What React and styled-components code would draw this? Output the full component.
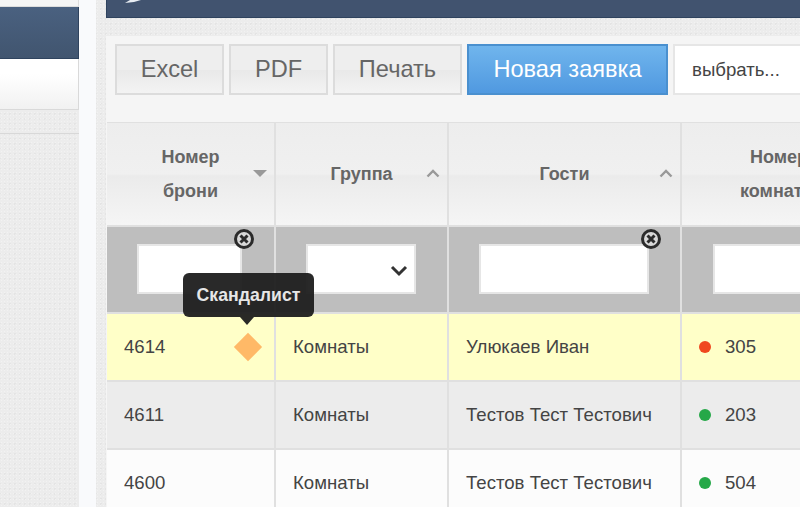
import React from 'react';
import styled, { createGlobalStyle } from 'styled-components';

const GlobalStyle = createGlobalStyle`
    html, body {
        margin: 0;
        height: 100%;
        overflow: hidden;
    }
    body {
        font-family: "Liberation Sans", Arial, sans-serif;
        color: #333;
    }
    #root {
        height: 100%;
    }
`;

const texture = `
    background-color: #ececec;
    background-image:
        radial-gradient(#f2f2f2 1px, transparent 1px),
        radial-gradient(#e4e4e4 1px, transparent 1px);
    background-size: 3px 3px, 5px 5px;
    background-position: 0 0, 2px 1px;
`;

const Page = styled.div`
    display: flex;
    height: 100%;
    overflow: hidden;
`;

const Sidebar = styled.aside`
    width: 79px;
    flex: none;
    display: flex;
    flex-direction: column;
    ${texture}
`;

const SideTop = styled.div`
    height: 7px;
    box-sizing: border-box;
    background: #f5f5f5;
    border-right: 1px solid #ddd;
    border-bottom: 1px solid #ddd;
`;

const SideActive = styled.div`
    height: 52px;
    background: linear-gradient(#4a6180, #41556f);
    border-right: 1px solid #2f435e;
    border-bottom: 1px solid #2f435e;
    box-sizing: border-box;
`;

const SideItem = styled.div`
    height: 51px;
    background: linear-gradient(#fff 30%, #f1f1f1);
    border-right: 1px solid #d9d9d9;
    border-bottom: 1px solid #d9d9d9;
    box-sizing: border-box;
`;

const SideDivider = styled.div`
    height: 23px;
    border-bottom: 1px solid #d8d8d8;
`;

const Gutter = styled.div`
    width: 17px;
    flex: none;
    background: #f9fafc;
`;

const Content = styled.main`
    flex: 1;
    min-width: 0;
    display: flex;
    flex-direction: column;
    padding-left: 10px;
    ${texture}
`;

const TopBar = styled.div`
    height: 18px;
    flex: none;
    background: #41536f;
    border-left: 1px solid #2f435e;
    border-bottom: 1px solid #2f435e;
    box-sizing: border-box;
    margin-bottom: 18px;
    padding-left: 18px;
`;

const TopIcon = styled.svg`
    display: block;
    width: 16px;
    height: 4px;
`;

const Panel = styled.section`
    flex: 1;
    min-height: 0;
    background: #f5f5f5;
    overflow: hidden;
`;

const Toolbar = styled.div`
    display: flex;
    gap: 5px;
    padding: 8px 0 0 9px;
    height: 51px;
    margin-bottom: 27px;
`;

const ToolButton = styled.button`
    flex: none;
    width: ${p => p.$w}px;
    height: 51px;
    padding: 0;
    box-sizing: border-box;
    border: 2px solid ${p => (p.$primary ? '#4a90cf' : '#dcdcdc')};
    background: ${p =>
        p.$primary
            ? 'linear-gradient(#70b5ed, #5099e0)'
            : 'linear-gradient(#eee 0, #eee 50%, #e9e9e9 52%, #f3f3f3 100%)'};
    color: ${p => (p.$primary ? '#fff' : '#666')};
    font: 23.6px "Liberation Sans", Arial, sans-serif;
`;

const SelectBox = styled.div`
    flex: none;
    width: 160px;
    height: 51px;
    box-sizing: border-box;
    border: 2px solid #e6e6e6;
    background: #fff;
    color: #444;
    font-size: 18.6px;
    display: flex;
    align-items: center;
    padding-left: 17px;
`;

const Table = styled.table`
    table-layout: fixed;
    width: 771px;
    border-collapse: separate;
    border-spacing: 0;
    margin-left: 1px;
    border-top: 1px solid #e0e0e0;
`;

const Col = styled.col`
    width: ${p => p.$w}px;
`;

const HeadCell = styled.th`
    position: relative;
    height: 104px;
    padding: 0;
    box-sizing: border-box;
    border-right: 2px solid #e0e0e0;
    border-bottom: 2px solid #e0e0e0;
    background: linear-gradient(#ededed 0, #f0f0f0 50%, #ebebeb 52%, #f5f5f5 100%);
    color: #666;
    font-size: 18px;
    font-weight: bold;
    line-height: 34px;
    text-align: center;
`;

const SortArrow = styled.svg`
    position: absolute;
    right: 7px;
    top: 46px;
    width: 14px;
    height: 9px;
`;

const FilterCell = styled.td`
    position: relative;
    height: 87px;
    padding: 0;
    box-sizing: border-box;
    border-right: 2px solid #e0e0e0;
    border-bottom: 2px solid #e0e0e0;
    background: #bebebe;
`;

const FilterInput = styled.div`
    position: absolute;
    left: ${p => p.$left}px;
    top: 17px;
    width: ${p => p.$w}px;
    height: 50px;
    box-sizing: border-box;
    background: #fff;
    border: 2px solid #e6e6e6;
`;

const ClearIcon = styled.svg`
    position: absolute;
    left: ${p => p.$left}px;
    top: 1px;
    width: 22px;
    height: 22px;
`;

const Chevron = styled.svg`
    position: absolute;
    right: 6px;
    top: 19px;
    width: 18px;
    height: 12px;
`;

const Cell = styled.td`
    position: relative;
    height: 68px;
    padding: 0 0 0 17px;
    box-sizing: border-box;
    border-right: 2px solid #e0e0e0;
    border-bottom: 2px solid #e0e0e0;
    background: ${p => p.$bg};
    color: #444;
    font-size: 18.6px;
    white-space: nowrap;
`;

const Dot = styled.span`
    display: inline-block;
    width: 12px;
    height: 12px;
    border-radius: 50%;
    background: ${p => p.$color};
    margin-right: 14px;
`;

const Diamond = styled.span`
    position: absolute;
    left: 131px;
    top: 23px;
    width: 20px;
    height: 20px;
    background: #ffb967;
    transform: rotate(45deg);
`;

const Tooltip = styled.div`
    position: absolute;
    left: 76px;
    top: -41px;
    width: 131px;
    height: 44px;
    box-sizing: border-box;
    z-index: 2;
    border-radius: 6px;
    background: rgba(30, 30, 30, 0.95);
    color: #e6e6e6;
    font-size: 17.7px;
    font-weight: bold;
    line-height: 44px;
    text-align: center;

    &::after {
        content: '';
        position: absolute;
        left: 57px;
        top: 44px;
        border: 7px solid transparent;
        border-top: 8px solid rgba(30, 30, 30, 0.95);
        border-bottom: 0;
    }
`;

const Clear = ({ left }) => (
    <ClearIcon $left={left} viewBox="0 0 22 22">
        <circle cx="11" cy="11" r="8.5" fill="#d8d8d8" stroke="#2b2b2b" strokeWidth="3" />
        <path d="M7.5 7.5l7 7M14.5 7.5l-7 7" stroke="#2b2b2b" strokeWidth="3" />
    </ClearIcon>
);

const Sort = ({ down }) => (
    <SortArrow viewBox="0 0 14 9">
        {down ? (
            <path d="M0 1h14L7 8z" fill="#999" />
        ) : (
            <path d="M1.5 7.5L7 2l5.5 5.5" fill="none" stroke="#999" strokeWidth="2.4" />
        )}
    </SortArrow>
);

const rows = [
    { id: 4614, guest: 'Улюкаев Иван', room: 305, dot: '#f0481f', bg: '#ffffc8', flagged: true },
    { id: 4611, guest: 'Тестов Тест Тестович', room: 203, dot: '#25a848', bg: '#ececec' },
    { id: 4600, guest: 'Тестов Тест Тестович', room: 504, dot: '#25a848', bg: '#fcfcfc' },
];

const App = () => (
    <Page>
        <GlobalStyle />
        <Sidebar>
            <SideTop />
            <SideActive />
            <SideItem />
            <SideDivider />
        </Sidebar>
        <Gutter />
        <Content>
            <TopBar>
                <TopIcon viewBox="0 0 16 4">
                    <path d="M0 3L5 0h11l-7 2z" fill="#e8edf3" />
                </TopIcon>
            </TopBar>
            <Panel>
                <Toolbar>
                    <ToolButton $w={109}>Excel</ToolButton>
                    <ToolButton $w={99}>PDF</ToolButton>
                    <ToolButton $w={129}>Печать</ToolButton>
                    <ToolButton $w={201} $primary>Новая заявка</ToolButton>
                    <SelectBox>выбрать...</SelectBox>
                </Toolbar>
                <Table>
                    <colgroup>
                        <Col $w={169} />
                        <Col $w={173} />
                        <Col $w={233} />
                        <Col $w={196} />
                    </colgroup>
                    <thead>
                        <tr>
                            <HeadCell>Номер<br />брони<Sort down /></HeadCell>
                            <HeadCell>Группа<Sort /></HeadCell>
                            <HeadCell>Гости<Sort /></HeadCell>
                            <HeadCell>Номер<br />комнаты</HeadCell>
                        </tr>
                        <tr>
                            <FilterCell>
                                <FilterInput $left={30} $w={105} />
                                <Clear left={126} />
                            </FilterCell>
                            <FilterCell>
                                <FilterInput $left={30} $w={110}>
                                    <Chevron viewBox="0 0 18 12">
                                        <path d="M2 2l7 7 7-7" fill="none" stroke="#333" strokeWidth="3" />
                                    </Chevron>
                                </FilterInput>
                            </FilterCell>
                            <FilterCell>
                                <FilterInput $left={30} $w={170} />
                                <Clear left={191} />
                            </FilterCell>
                            <FilterCell>
                                <FilterInput $left={31} $w={170} />
                            </FilterCell>
                        </tr>
                    </thead>
                    <tbody>
                        {rows.map(row => (
                            <tr key={row.id}>
                                <Cell $bg={row.bg}>
                                    {row.id}
                                    {row.flagged && <Diamond />}
                                    {row.flagged && <Tooltip>Скандалист</Tooltip>}
                                </Cell>
                                <Cell $bg={row.bg}>Комнаты</Cell>
                                <Cell $bg={row.bg}>{row.guest}</Cell>
                                <Cell $bg={row.bg}>
                                    <Dot $color={row.dot} />
                                    {row.room}
                                </Cell>
                            </tr>
                        ))}
                    </tbody>
                </Table>
            </Panel>
        </Content>
    </Page>
);

export default App;
